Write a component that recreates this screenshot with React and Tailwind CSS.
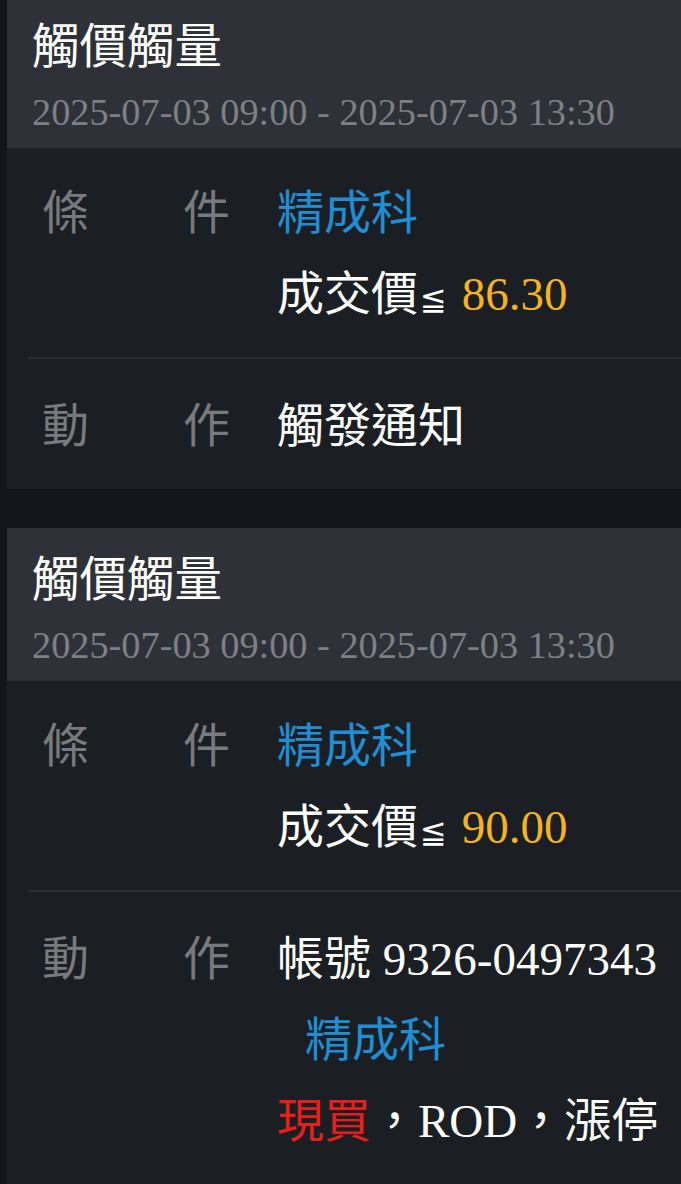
import React from 'react';

const alerts = [
  {
    id: 1,
    title: '觸價觸量',
    period: '2025-07-03 09:00 - 2025-07-03 13:30',
    stock: '精成科',
    price: '86.30',
    action: { type: 'notify', text: '觸發通知' },
  },
  {
    id: 2,
    title: '觸價觸量',
    period: '2025-07-03 09:00 - 2025-07-03 13:30',
    stock: '精成科',
    price: '90.00',
    action: { type: 'order', account: '9326-0497343', stock: '精成科', side: '現買', rest: '，ROD，漲停' },
  },
];

const font = { fontFamily: '"Liberation Serif", "Noto Sans CJK TC", serif' };

const Label = ({ a, b }) => (
  <div className="flex justify-between w-[188px] shrink-0 text-[#787b7e]">
    <span>{a}</span>
    <span>{b}</span>
  </div>
);

const AlertCard = ({ alert }) => {
  return (
    <div className="bg-[#1b1f23]">
      <div className="bg-[#2e3137] pl-[25px] pt-[24px] pb-[13px]">
        <div className="text-[47.5px] leading-[56px] text-white">{alert.title}</div>
        <div className="mt-[14px] text-[38.3px] leading-[46px] text-[#7d8085]">{alert.period}</div>
      </div>

      <div className="pt-[25px] pb-[22px] pl-[35px] flex text-[47px] leading-[81px]">
        <Label a="條" b="件" />
        <div className="ml-[47px] whitespace-nowrap">
          <div className="text-[#1f8ed3]">{alert.stock}</div>
          <div className="flex items-baseline text-white">
            <span>成交價</span>
            <span className="ml-[2px] text-[32px] leading-none font-['DejaVu_Sans']">≦</span>
            <span className="ml-[15px] text-[#f5b320]">{alert.price}</span>
          </div>
        </div>
      </div>

      <div className="ml-[21px] h-[2px] bg-[#2a2f34]" />

      <div className="pt-[27px] pb-[22px] pl-[35px] flex text-[47px] leading-[81px]">
        <Label a="動" b="作" />
        <div className="ml-[47px] whitespace-nowrap text-white">
          {alert.action.type === 'notify' ? (
            <div>{alert.action.text}</div>
          ) : (
            <>
              <div>帳號 {alert.action.account}</div>
              <div className="pl-[28px] text-[#1f8ed3]">{alert.action.stock}</div>
              <div>
                <span className="text-[#e5201c]">{alert.action.side}</span>
                {alert.action.rest}
              </div>
            </>
          )}
        </div>
      </div>
    </div>
  );
};

const App = () => {
  return (
    <div className="min-h-[1184px] bg-[#12161a] pl-[7px] overflow-hidden" style={font}>
      <div className="-mt-[5px] flex flex-col gap-[39px]">
        {alerts.map(alert => (
          <AlertCard key={alert.id} alert={alert} />
        ))}
      </div>
    </div>
  );
};

export default App;
